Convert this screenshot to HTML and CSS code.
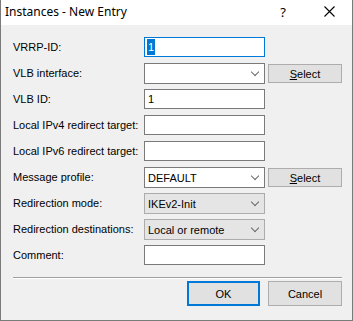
FILE: index.html
```html
<!DOCTYPE html>
<html lang="en">
<head>
    <meta charset="UTF-8">
    <title>Instances - New Entry</title>
    <link rel="stylesheet" href="styles.css">
</head>
<body>

    <div class="window">
        <div class="titlebar">
            <span class="title">Instances - New Entry</span>
            <span class="help">?</span>
            <span class="close">
                <svg width="11" height="11" viewBox="0 0 11 11"><path d="M0.5 0.5 L10.5 10.5 M10.5 0.5 L0.5 10.5" stroke="#000" stroke-width="1.1" fill="none"/></svg>
            </span>
        </div>

        <div class="content">
            <div class="form">
                <label>VRRP-ID:</label>
                <div class="field input focused"><span class="sel">1</span></div>
                <div></div>

                <label>VLB interface:</label>
                <div class="field combo"><span></span><i class="chev"></i></div>
                <button class="btn select"><u>S</u>elect</button>

                <label>VLB ID:</label>
                <div class="field input"><span class="val">1</span></div>
                <div></div>

                <label>Local IPv4 redirect target:</label>
                <div class="field input"></div>
                <div></div>

                <label>Local IPv6 redirect target:</label>
                <div class="field input"></div>
                <div></div>

                <label>Message profile:</label>
                <div class="field combo"><span>DEFAULT</span><i class="chev"></i></div>
                <button class="btn select"><u>S</u>elect</button>

                <label>Redirection mode:</label>
                <div class="field combo readonly"><span>IKEv2-Init</span><i class="chev"></i></div>
                <div></div>

                <label>Redirection destinations:</label>
                <div class="field combo readonly"><span>Local or remote</span><i class="chev"></i></div>
                <div></div>

                <label>Comment:</label>
                <div class="field input"></div>
                <div></div>
            </div>

            <div class="separator"></div>

            <div class="buttons">
                <button class="btn default">OK</button>
                <button class="btn">Cancel</button>
            </div>
        </div>
    </div>

</body>
</html>
```

FILE: styles.css
```css
body {
    margin: 0;
    background: #fff;
    font-family: 'Liberation Sans', Arial, sans-serif;
    font-size: 11px;
    color: #000;
}

.window {
    width: 353px;
    height: 321px;
    box-sizing: border-box;
    border: 1px solid #7a7a7a;
    border-top: none;
    display: flex;
    flex-direction: column;
    background: #f0f0f0;
}

.titlebar {
    height: 25px;
    background: #fff;
    display: flex;
    align-items: center;
    padding-left: 4px;
}

.title {
    font-family: 'Noto Sans', sans-serif;
    font-size: 12px;
    flex: 1;
    margin-top: -2px;
}

.help {
    font-family: 'Noto Sans', sans-serif;
    font-size: 13px;
    width: 46px;
    text-align: center;
    margin-top: -2px;
}

.close {
    width: 46px;
    display: flex;
    justify-content: center;
    margin-top: -3px;
}

.content {
    flex: 1;
    display: flex;
    flex-direction: column;
    padding: 12px 10px 0 11px;
}

/* label / field / button grid */
.form {
    display: grid;
    grid-template-columns: 129px 121px 74px;
    grid-auto-rows: 20px;
    row-gap: 6px;
    column-gap: 3px;
    align-items: start;
}

.form label {
    align-self: center;
    padding-left: 1px;
    white-space: nowrap;
}

.field {
    box-sizing: border-box;
    height: 20px;
    border: 1px solid #7a7a7a;
    background: #fff;
    display: flex;
    align-items: center;
    padding-left: 2px;
}

.field.focused {
    border-color: #0078d7;
}

.sel {
    background: #0078d7;
    color: #fff;
    padding: 1px 1px;
    line-height: 14px;
}

.val {
    padding-left: 1px;
}

.combo {
    height: 21px;
    justify-content: space-between;
    padding-left: 3px;
    padding-right: 6px;
}

.combo.readonly {
    background: #e5e5e5;
    border-color: #acacac;
}

.chev {
    width: 5px;
    height: 5px;
    border-right: 1px solid #6a6a6a;
    border-bottom: 1px solid #6a6a6a;
    transform: rotate(45deg);
    margin-top: -4px;
}

.btn {
    box-sizing: border-box;
    font-family: 'Liberation Sans', Arial, sans-serif;
    font-size: 11px;
    color: #000;
    background: #e1e1e1;
    border: 1px solid #adadad;
    padding: 0;
}

.btn.select {
    height: 19px;
    margin-top: 1px;
}

.separator {
    margin-top: 12px;
    margin-left: 1px;
    height: 1px;
    background: #a0a0a0;
    border-bottom: 1px solid #fff;
}

.buttons {
    display: flex;
    justify-content: flex-end;
    gap: 8px;
    margin-top: 2px;
}

.buttons .btn {
    width: 74px;
    height: 25px;
}

.buttons .btn.default {
    width: 73px;
    border: 2px solid #0078d7;
}
```
